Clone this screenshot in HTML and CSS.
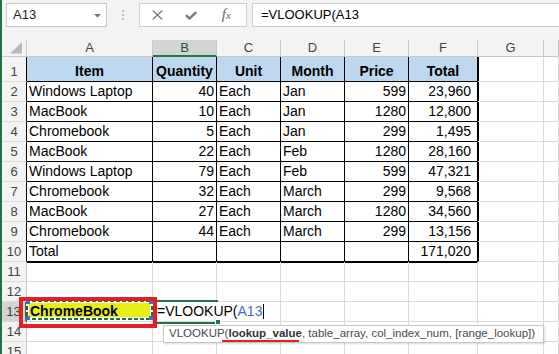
FILE: index.html
```html
<!DOCTYPE html>
<html>
<head>
<meta charset="utf-8">
<link rel="stylesheet" href="styles.css">
</head>
<body>
<div class="app">
  <div class="fbar">
    <div class="namebox"><span>A13</span><svg class="dd" width="7" height="4" viewBox="0 0 7 4"><polygon points="0,0 7,0 3.5,3.5" fill="#767676"/></svg></div>
    <div class="grip"><svg width="2" height="10" viewBox="0 0 2 10"><rect x="0" y="0" width="2" height="2" fill="#bdbdbd"/><rect x="0" y="4" width="2" height="2" fill="#bdbdbd"/><rect x="0" y="8" width="2" height="2" fill="#bdbdbd"/></svg></div>
    <div class="fbtns">
      <div class="fb fb1"><svg width="11" height="10" viewBox="0 0 11 10"><path d="M0.8 0.6 L10.2 9.4 M10.2 0.6 L0.8 9.4" stroke="#6b6b6b" stroke-width="1.3" fill="none"/></svg></div>
      <div class="fb fb2"><svg width="12" height="9" viewBox="0 0 12 9"><path d="M1 4.2 L4.6 7.6 L11.2 1" stroke="#7a7a7a" stroke-width="2.4" fill="none"/></svg></div>
      <div class="fb fb3"><span class="fx">f<span class="fxx">x</span></span></div>
    </div>
    <div class="finput">=VLOOKUP(A13</div>
  </div>
  <div class="sheet">
    <div class="h corner"><svg width="13" height="12" viewBox="0 0 13 12"><polygon points="0,11.5 12,11.5 12,0" fill="#b9b9b9"/></svg></div>
    <div class="h">A</div><div class="h sel">B</div><div class="h">C</div><div class="h">D</div><div class="h">E</div><div class="h">F</div><div class="h">G</div><div class="h"></div>

    <div class="r tl">1</div><div class="c t th">Item</div><div class="c t th">Quantity</div><div class="c t th">Unit</div><div class="c t th">Month</div><div class="c t th">Price</div><div class="c t th">Total</div><div class="c gl"></div><div class="c"></div>

    <div class="r tl">2</div><div class="c t">Windows Laptop</div><div class="c t n">40</div><div class="c t">Each</div><div class="c t">Jan</div><div class="c t n">599</div><div class="c t n f">23,960</div><div class="c gl"></div><div class="c"></div>
    <div class="r tl">3</div><div class="c t">MacBook</div><div class="c t n">10</div><div class="c t">Each</div><div class="c t">Jan</div><div class="c t n">1280</div><div class="c t n f">12,800</div><div class="c gl"></div><div class="c"></div>
    <div class="r tl">4</div><div class="c t">Chromebook</div><div class="c t n">5</div><div class="c t">Each</div><div class="c t">Jan</div><div class="c t n">299</div><div class="c t n f">1,495</div><div class="c gl"></div><div class="c"></div>
    <div class="r tl">5</div><div class="c t">MacBook</div><div class="c t n">22</div><div class="c t">Each</div><div class="c t">Feb</div><div class="c t n">1280</div><div class="c t n f">28,160</div><div class="c gl"></div><div class="c"></div>
    <div class="r tl">6</div><div class="c t">Windows Laptop</div><div class="c t n">79</div><div class="c t">Each</div><div class="c t">Feb</div><div class="c t n">599</div><div class="c t n f">47,321</div><div class="c gl"></div><div class="c"></div>
    <div class="r tl">7</div><div class="c t">Chromebook</div><div class="c t n">32</div><div class="c t">Each</div><div class="c t">March</div><div class="c t n">299</div><div class="c t n f">9,568</div><div class="c gl"></div><div class="c"></div>
    <div class="r tl">8</div><div class="c t">MacBook</div><div class="c t n">27</div><div class="c t">Each</div><div class="c t">March</div><div class="c t n">1280</div><div class="c t n f">34,560</div><div class="c gl"></div><div class="c"></div>
    <div class="r tl">9</div><div class="c t">Chromebook</div><div class="c t n">44</div><div class="c t">Each</div><div class="c t">March</div><div class="c t n">299</div><div class="c t n f">13,156</div><div class="c gl"></div><div class="c"></div>
    <div class="r tl">10</div><div class="c t">Total</div><div class="c t"></div><div class="c t"></div><div class="c t"></div><div class="c t"></div><div class="c t n f">171,020</div><div class="c gl"></div><div class="c"></div>

    <div class="r">11</div><div class="c bt"></div><div class="c bt"></div><div class="c bt"></div><div class="c bt"></div><div class="c bt"></div><div class="c bt"></div><div class="c"></div><div class="c"></div>
    <div class="r">12</div><div class="c"></div><div class="c"></div><div class="c"></div><div class="c"></div><div class="c"></div><div class="c"></div><div class="c"></div><div class="c"></div>
    <div class="r sel">13</div>
    <div class="c a13"><div class="marq"></div><span class="hd hd1"></span><span class="hd hd2"></span><span class="hd hd3"></span><span class="hd hd4"></span><span class="a13t">ChromeBook</span></div>
    <div class="c b13"><div class="act"></div><div class="fh"></div><span class="edit">=VLOOKUP(<span class="ref">A13</span><span class="cur"></span></span></div>
    <div class="c"></div><div class="c"></div><div class="c"></div><div class="c"></div><div class="c"></div><div class="c"></div>
    <div class="r">14</div><div class="c"></div><div class="c"></div><div class="c"></div><div class="c"></div><div class="c"></div><div class="c"></div><div class="c"></div><div class="c"></div>
    <div class="r">15</div><div class="c"></div><div class="c"></div><div class="c"></div><div class="c"></div><div class="c"></div><div class="c"></div><div class="c"></div><div class="c"></div>
  </div>

  <div class="redbox"></div>
  <div class="tip">VLOOKUP(<b>lookup_value</b>, table_array, col_index_num, [range_lookup])</div>
  <div class="redline"></div>
</div>
</body>
</html>
```

FILE: styles.css
```css
* { box-sizing: border-box; margin: 0; padding: 0; }
html, body { margin: 0; width: 559px; height: 354px; overflow: hidden; background: #fff; }
body { font-family: "Liberation Sans", Arial, sans-serif; }

.app { position: relative; height: 354px; border-left: 2px solid #217346; overflow: hidden; }

.fbar { display: flex; align-items: flex-start; height: 40px; background: #f3f3f3; padding: 3px 0 0 4px; }
.namebox { width: 101px; height: 24px; flex: none; background: #fff; border: 1px solid #c6c6c6; display: flex; align-items: center; justify-content: space-between; padding: 0 5px 0 6px; font-size: 13px; color: #222; line-height: 22px; }
.namebox .dd { margin-top: 1px; }
.grip { width: 32px; height: 24px; flex: none; display: flex; align-items: center; justify-content: center; }
.fbtns { width: 108px; height: 24px; flex: none; background: #fff; border: 1px solid #d0d0d0; display: flex; align-items: center; }
.fb { height: 22px; display: flex; align-items: center; justify-content: center; }
.fb1 { width: 36px; }
.fb2 { width: 32px; }
.fb3 { width: 40px; }
.fx { font-family: "Liberation Serif", serif; font-style: italic; font-size: 15px; color: #666; line-height: 15px; }
.fxx { font-size: 11px; }
.finput { flex: 1; height: 24px; margin-left: 5px; margin-right: -2px; background: #fff; border: 1px solid #d0d0d0; padding-left: 8px; font-size: 13px; line-height: 22px; color: #000; white-space: nowrap; }

.sheet { display: grid; grid-template-columns: 25px 126px 64px 64px 64px 64px 69px 66px 1fr; grid-template-rows: 17px 25px repeat(14, 20px); }

.c { border-right: 1px solid #d9d9d9; border-bottom: 1px solid #d9d9d9; font-size: 14px; line-height: 17px; display: flex; align-items: flex-end; padding: 0 2px 1px 2px; white-space: nowrap; overflow: hidden; color: #000; }
.h { background: #f3f3f3; border-right: 1px solid #c8c8c8; border-bottom: 1px solid #c8c8c8; display: flex; align-items: flex-end; justify-content: center; font-size: 13px; line-height: 15px; padding-bottom: 1px; color: #444; }
.h.sel { background: #d4d4d4; border-bottom: 2px solid #217346; padding-bottom: 0; color: #264e36; }
.corner { align-items: flex-end; justify-content: flex-end; padding: 0 3px 2px 0; }

.r { background: #f3f3f3; border-right: 1px solid #c8c8c8; border-bottom: 1px solid #dadada; display: flex; align-items: flex-end; justify-content: center; font-size: 13px; line-height: 17px; padding-bottom: 1px; color: #444; }
.r.tl { border-right-color: #000; }
.r.sel { background: #d4d4d4; border-right: 2px solid #217346; color: #264e36; }

.t { border-right-color: #000; border-bottom-color: #000; }
.th { background: #bdd7ee; font-weight: bold; justify-content: center; }
.n { justify-content: flex-end; padding-right: 2px; }
.f { padding-right: 6px; }
.gl { box-shadow: inset 1px 0 0 #000; }
.bt { box-shadow: inset 0 1px 0 #000; }

.a13 { position: relative; overflow: visible; font-weight: bold; }
.marq { position: absolute; left: -1px; top: -2px; width: 127px; height: 20px;
  background:
    repeating-linear-gradient(90deg, #1f6e3d 0 4px, #fff 4px 6px) left top / 100% 2px no-repeat,
    repeating-linear-gradient(90deg, #1f6e3d 0 4px, #fff 4px 6px) left bottom / 100% 2px no-repeat,
    repeating-linear-gradient(180deg, #1f6e3d 0 4px, #fff 4px 6px) left top / 2px 100% no-repeat,
    repeating-linear-gradient(180deg, #1f6e3d 0 4px, #fff 4px 6px) right top / 2px 100% no-repeat,
    linear-gradient(#e6ee14, #e6ee14) center / calc(100% - 6px) calc(100% - 6px) no-repeat,
    #fff; }
.hd { position: absolute; width: 4px; height: 4px; background: #3f6fc4; }
.hd1 { left: -1px; top: -2px; }
.hd2 { left: 122px; top: -2px; }
.hd3 { left: -1px; top: 14px; }
.hd4 { left: 122px; top: 14px; }
.a13t { position: relative; padding-left: 1px; }

.b13 { position: relative; overflow: visible; padding-left: 4px; }
.edit { position: relative; background: #fff; display: inline-flex; align-items: flex-end; }
.ref { color: #3f6fc6; }
.cur { display: inline-block; width: 1px; height: 15px; background: #000; margin-left: 1px; margin-bottom: 1px; }
.act { position: absolute; left: 0; top: -2px; width: 65px; height: 24px; border-top: 2px solid #217346; border-bottom: 2px solid #217346; }
.fh { position: absolute; left: 62px; top: 17px; width: 6px; height: 6px; background: #217346; border: 1px solid #fff; }

.redbox { position: absolute; left: 17px; top: 297px; width: 138px; height: 31px; border: 4px solid #e31e25; }
.tip { position: absolute; left: 161px; top: 325px; width: 381px; height: 18px; background: #fff; border: 1px solid #c6c6c6; box-shadow: 1px 1px 2px rgba(0,0,0,0.15); padding: 0 0 0 5px; font-size: 11.5px; line-height: 15px; color: #4a4a4a; white-space: nowrap; }
.tip b { color: #333; }
.redline { position: absolute; left: 220px; top: 340px; width: 77px; height: 2px; background: #e31e25; }
```
